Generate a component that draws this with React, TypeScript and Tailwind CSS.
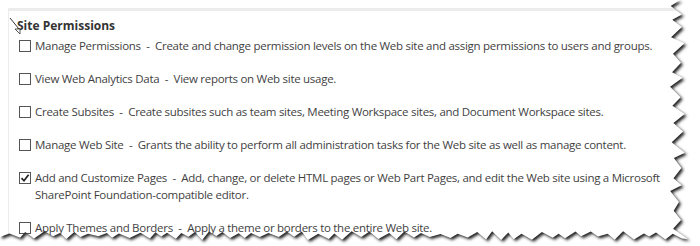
import React from 'react';

const permissions = [
  {
    name: 'Manage Permissions',
    desc: 'Create and change permission levels on the Web site and assign permissions to users and groups.',
    checked: false,
  },
  { name: 'View Web Analytics Data', desc: 'View reports on Web site usage.', checked: false },
  {
    name: 'Create Subsites',
    desc: 'Create subsites such as team sites, Meeting Workspace sites, and Document Workspace sites.',
    checked: false,
  },
  {
    name: 'Manage Web Site',
    desc: 'Grants the ability to perform all administration tasks for the Web site as well as manage content.',
    checked: false,
  },
  {
    name: 'Add and Customize Pages',
    desc: 'Add, change, or delete HTML pages or Web Part Pages, and edit the Web site using a Microsoft',
    desc2: 'SharePoint Foundation-compatible editor.',
    checked: true,
  },
  { name: 'Apply Themes and Borders', desc: 'Apply a theme or borders to the entire Web site.', checked: false },
];

// deterministic jitter for the torn edge
function rand(i: number) {
  const x = Math.sin(i * 12.9898 + 78.233) * 43758.5453;
  return x - Math.floor(x);
}

function tornPath() {
  const pts: string[] = ['0,0', '680,0'];
  // right edge going down
  let y = 6;
  let i = 0;
  while (y < 234) {
    const x = i % 2 === 0 ? 670 + rand(i) * 4 : 679 + rand(i + 50) * 6;
    pts.push(`${x.toFixed(1)},${y.toFixed(1)}`);
    y += 5 + rand(i + 100) * 6;
    i++;
  }
  pts.push('688,239');
  // bottom edge going left
  let x = 682;
  i = 0;
  while (x > 0) {
    const yy = i % 2 === 0 ? 236 + rand(i + 200) * 4 : 231 + rand(i + 300) * 3;
    pts.push(`${x.toFixed(1)},${yy.toFixed(1)}`);
    x -= 5 + rand(i + 400) * 6;
    i++;
  }
  pts.push('0,237');
  return 'M' + pts.join(' L') + ' Z';
}

function TornEdge() {
  const d = tornPath();
  return (
    <svg className="absolute inset-0 pointer-events-none" width="700" height="246" viewBox="0 0 700 246">
      <defs>
        <filter id="blur" x="-10%" y="-10%" width="120%" height="120%">
          <feGaussianBlur stdDeviation="1.4" />
        </filter>
        <mask id="outside">
          <rect x="0" y="0" width="700" height="246" fill="white" />
          <path d={d} fill="black" />
        </mask>
      </defs>
      <g mask="url(#outside)">
        <rect x="0" y="0" width="700" height="246" fill="white" />
        <path d={d} fill="#222" filter="url(#blur)" transform="translate(2,2)" />
      </g>
    </svg>
  );
}

function Checkbox({ checked }: { checked: boolean }) {
  return (
    <span className="flex w-[12px] h-[12px] mt-[3px] shrink-0 items-center justify-center border border-[#555] bg-white">
      {checked && (
        <svg width="10" height="10" viewBox="0 0 10 10">
          <path d="M1.5 5.2 L4 7.8 L8.6 1.8" fill="none" stroke="#222" strokeWidth="1.7" />
        </svg>
      )}
    </span>
  );
}

export default function App() {
  return (
    <div className="relative w-[700px] h-[246px] overflow-hidden bg-white font-['Open_Sans',sans-serif] text-[#3f3f3f]">
      <div className="pt-[8px] pl-[8px]">
        <div className="h-[238px] border-t-[3px] border-l border-[#ececec] pl-[7px] pt-[7px]">
          <div className="text-[12px] font-bold text-[#333] leading-[16px] pl-[1px]">Site Permissions</div>
          <div className="flex flex-col gap-[16px] mt-[3px] pl-[3px]">
            {permissions.map((p) => (
              <div key={p.name} className="flex items-start gap-[4px] text-[11.5px] leading-[17px] tracking-[-0.28px]">
                <Checkbox checked={p.checked} />
                <div>
                  <div className="whitespace-nowrap">
                    {p.name}&nbsp; -&nbsp; {p.desc}
                  </div>
                  {p.desc2 && <div className="whitespace-nowrap">{p.desc2}</div>}
                </div>
              </div>
            ))}
          </div>
        </div>
      </div>
      <svg className="absolute left-[9px] top-[17px]" width="12" height="18" viewBox="0 0 12 18">
        <path d="M1 1 L10 12" stroke="#333" strokeWidth="1" />
        <path d="M6 12 L11 12 L11 17 Z" fill="white" stroke="#333" strokeWidth="0.8" />
      </svg>
      <TornEdge />
    </div>
  );
}
